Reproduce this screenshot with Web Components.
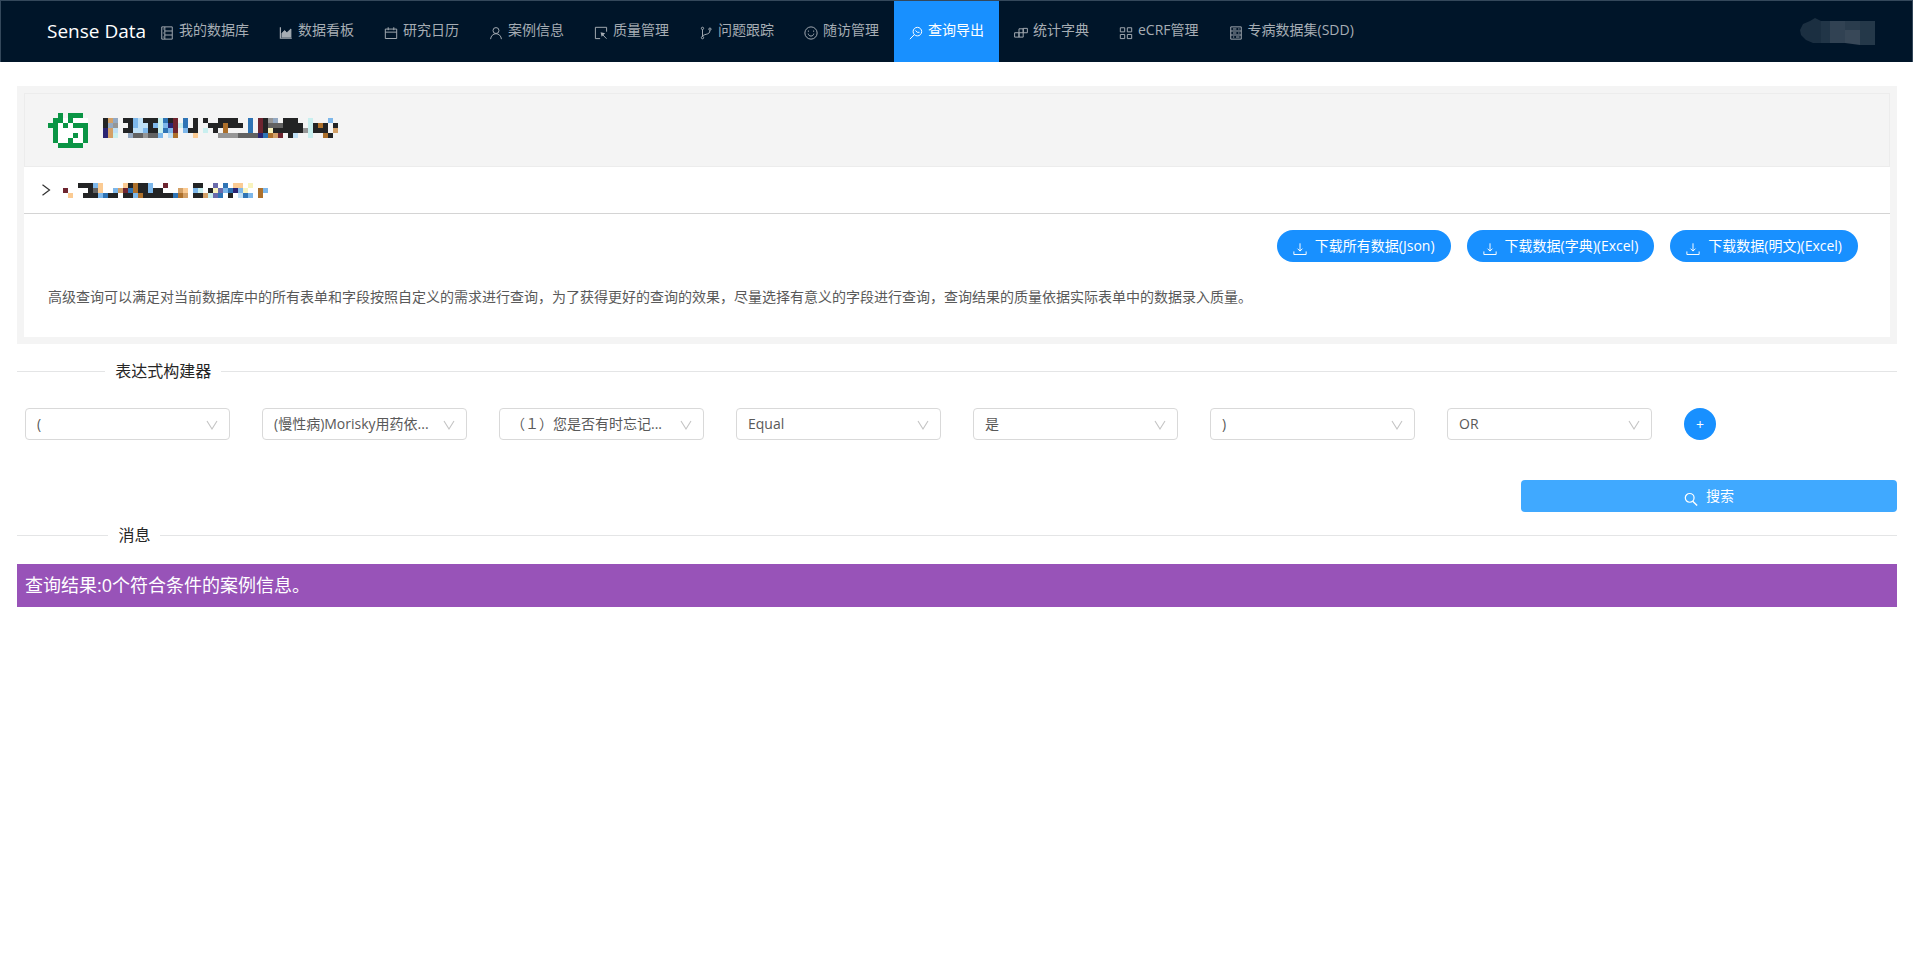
<!DOCTYPE html>
<html lang="zh-CN">
<head>
<meta charset="utf-8">
<title>Sense Data</title>
<style>
  body { margin: 0; background: #fff; color: #595959; font: 14px/22px "Open Sans", "Noto Sans CJK SC", sans-serif; }
</style>
</head>
<body>
<sense-page></sense-page>
<script>
const ICONS = {
  database: '<path d="M2 1h12v14H2zM5.500 5.700H14M5.500 10.300H14M5.500 1v14M3.300 3.400h1M3.300 8h1M3.300 12.600h1"/>',
  chart: '<path d="M1.6 1.5v12.4h13" stroke-width="1.4"/><path d="M3.4 12.6V8.4l3-3.2 2.6 2.6 4.6-4.4v9.2z" fill="currentColor"/>',
  calendar: '<path d="M1.5 3.5h13v10.8h-13zM1.5 7h13M4.8 1.4v3.4M11.2 1.4v3.4"/>',
  user: '<circle cx="8" cy="5.2" r="3.4"/><path d="M1.8 15c.3-3.6 3-6.2 6.2-6.2s5.900 2.600 6.200 6.200"/>',
  select: '<path d="M14.400 6.500v-5h-12.800v12.900h5.400M8.500 8.500l5.800 6"/><path d="M7.500 7l5.200 1.200-4 4z" fill="currentColor" stroke="none"/>',
  branch: '<circle cx="4" cy="2.700" r="1.300"/><circle cx="4" cy="13.300" r="1.300"/><circle cx="12.500" cy="3.600" r="1.300"/><path d="M4 4v8M12.500 5c0 3.200-1.800 3.800-4.300 4.500-2.200.6-3.600 1-4.100 2.500"/>',
  smile: '<circle cx="8" cy="8" r="7"/><path d="M4.800 8.700c.3 1.800 1.600 2.800 3.200 2.800s2.900-1 3.200-2.800M5 5.200v1.400M11 5.200v1.400"/>',
  query: '<circle cx="9.600" cy="6.400" r="4.900"/><path d="M6.200 9.800L1 15M7.400 5.200l2.200 2h2.400"/>',
  blocks: '<path d="M.7 7.700h5v5h-5zM5.700 7.700h4.800v5H5.700zM5.700 3.200h4.800v4.500M10.500 2.700h4.800v5h-4.800zM5.700 3.200v4.500"/>',
  grid: '<path d="M1.500 2h5v4.700h-5zM9.500 2h5v4.700h-5zM1.500 9.700h5v4.700h-5zM9.500 9.700h5v4.700h-5z"/>',
  server: '<path d="M2 1h12v14H2zM2 5.700h12M2 10.300h12M4.500 3.400h4M4.500 8h4M4.500 12.600h1.500M10.500 8h1.500M10.500 3.400h1.500M8 12.600h4"/>',
  download: '<path d="M8 1.500v8.800M5.200 7.600L8 10.400l2.800-2.800M1 10.800v3.500h14v-3.500"/>',
  search: '<circle cx="6.500" cy="6.700" r="5" stroke-width="1.400"/><path d="M10 10.600l5 4.900" stroke-width="1.600"/>',
  right: '<path d="M4 2l8 6-8 6" stroke-width="1.400"/>'
};

/* Colour keys of the cell pictures; a dot leaves the cell empty. */
const PALETTE = {
  G: '#0b9545', W: '#ffffff', K: '#232425', n: '#2a2472', b: '#2f74b5', l: '#7db7ea', c: '#c9efef',
  t: '#d3a067', o: '#ad702b', r: '#6e2530', g: '#626262', h: '#969696', p: '#bfe0f6',
  y: '#f8f3bd', e: '#fbcb93', s: '#94a9c2', v: '#6a6bab'
};
const CELLS = {
  logo: [
    '..G.GGG.',
    '.GGWGWWW',
    'GGWGWGGG',
    '.GWWWWWG',
    '.GWWWGWG',
    '.GWWGWWG',
    '..GGGGG.'
  ],
  title: [
    'Kts.KKlpKKKcbKr.b.K.K..KKKK..b.rKhs.KKK..c...l.',
    'Ksh..KlppKlclnrcb.K..KKKoKKK.b.rKgggKKKK.cKoK.K',
    'ntp.KKpplKKcblr.lKK.c.K.o....b.rKyKKKKKKhcKKK.t',
    'ntc..sgghggl.po...e....hhhhggggnbotr.Kp..c..oK.'
  ],
  subtitle: [
    '...KKKle....eKoKKl..r.....KK..v.b.ee.y...',
    'r....Kge..ltrboKKlKK...te.lc.KyvlbnlyW.ol',
    '.e..KKKlbKK.KKloKKKKKKbot.KKtcvb.K.pbl.o.'
  ]
};

/* The setup runs on the cloned content before it is connected, so nested elements find their attributes in place. */
const define = (name, html, setup) => {
  const template = document.createElement('template');
  template.innerHTML = html;
  customElements.define(name, class extends HTMLElement {
    connectedCallback() {
      if (this.shadowRoot) return;
      const content = template.content.cloneNode(true);
      if (setup) setup(content, this);
      this.attachShadow({ mode: 'open' }).append(content);
    }
  });
};

define('sense-icon', `
  <style>
    :host { display: block; flex: none; width: 14px; height: 14px; }
    svg { display: block; width: 100%; height: 100%; }
  </style>
  <svg viewBox="0 0 16 16" fill="none" stroke="currentColor" stroke-width="1.1" aria-hidden="true"></svg>`,
  (root, host) => { root.querySelector('svg').innerHTML = ICONS[host.getAttribute('name')]; });

define('cell-picture', `
  <style>
    :host { display: block; flex: none; }
    svg { display: block; }
  </style>
  <svg shape-rendering="crispEdges" aria-hidden="true"></svg>`,
  (root, host) => {
    const rows = CELLS[host.getAttribute('name')];
    const svg = root.querySelector('svg');
    svg.setAttribute('width', rows[0].length * 5);
    svg.setAttribute('height', rows.length * 5);
    svg.innerHTML = rows.map((row, y) => [...row].map((key, x) => PALETTE[key]
      ? `<rect x="${x * 5}" y="${y * 5}" width="5" height="5" fill="${PALETTE[key]}"/>` : '').join('')).join('');
  });

define('nav-item', `
  <style>
    :host { display: flex; }
    a { display: flex; align-items: center; gap: 5px; padding: 0 15px 4px; color: #a6adb4; text-decoration: none; white-space: nowrap; }
    sense-icon { margin-top: 7px; }
    :host([active]) a { background: #1890ff; color: #fff; }
  </style>
  <a href="#"><sense-icon></sense-icon><slot></slot></a>`,
  (root, host) => {
    root.querySelector('sense-icon').setAttribute('name', host.getAttribute('icon'));
    if (host.hasAttribute('active')) root.querySelector('a').setAttribute('aria-current', 'page');
  });

define('sense-header', `
  <style>
    :host { display: block; }
    header { display: flex; box-sizing: border-box; height: 62px; padding: 0 37px 0 46px; background: #001529; border: 1px solid #34485b; border-bottom: 0; }
    .brand { display: flex; align-items: center; width: 98px; padding-bottom: 2px; color: #fff; font-size: 19px; text-decoration: none; white-space: nowrap; }
    nav { display: flex; flex: 1; }
    .account { align-self: center; }
    .account svg { display: block; }
  </style>
  <header>
    <a class="brand" href="#">Sense Data</a>
    <nav aria-label="主导航">
      <nav-item icon="database">我的数据库</nav-item>
      <nav-item icon="chart">数据看板</nav-item>
      <nav-item icon="calendar">研究日历</nav-item>
      <nav-item icon="user">案例信息</nav-item>
      <nav-item icon="select">质量管理</nav-item>
      <nav-item icon="branch">问题跟踪</nav-item>
      <nav-item icon="smile">随访管理</nav-item>
      <nav-item icon="query" active>查询导出</nav-item>
      <nav-item icon="blocks">统计字典</nav-item>
      <nav-item icon="grid">eCRF管理</nav-item>
      <nav-item icon="server">专病数据集(SDD)</nav-item>
    </nav>
    <div class="account">
      <svg width="75" height="27" viewBox="0 0 75 27" aria-hidden="true">
        <path d="M0 12L3 6 10 3 15 0l6 3v22H13L6 22 1 17z" fill="#1b2f41"/>
        <path d="M21 3h9v22h-9z" fill="#213547"/>
        <path d="M30 3h15v22H30z" fill="#314253"/>
        <path d="M45 3h15v9H45z" fill="#2a3c4d"/>
        <path d="M45 12h15v15l-15-2z" fill="#384858"/>
        <path d="M60 3h15v24H60z" fill="#243849"/>
      </svg>
    </div>
  </header>`);

define('action-button', `
  <style>
    :host { display: block; }
    button { display: flex; align-items: center; justify-content: center; gap: 8px; box-sizing: border-box; width: 100%; height: 32px; margin: 0; padding: 0 16px; border: 0; border-radius: 16px; background: #1890ff; color: #fff; font: inherit; white-space: nowrap; cursor: pointer; }
    sense-icon { margin-top: 6px; }
    :host([block]) button { border-radius: 4px; background: #40a9ff; }
  </style>
  <button type="button"><sense-icon></sense-icon><slot></slot></button>`,
  (root, host) => root.querySelector('sense-icon').setAttribute('name', host.getAttribute('icon')));

define('project-panel', `
  <style>
    :host { display: block; padding: 7px; background: #f4f4f4; }
    .title { display: flex; align-items: center; gap: 15px; box-sizing: border-box; height: 74px; padding: 0 23px; border: 1px solid #ececec; }
    .title cell-picture + cell-picture { margin-bottom: 5px; }
    .sub { display: flex; align-items: center; box-sizing: border-box; width: 100%; height: 47px; margin: 0; padding: 0 15px; gap: 10px; border: 0; border-bottom: 1px solid #d4d4d4; background: #fff; color: #333; }
    .content { padding: 16px 32px 29px 24px; background: #fff; }
    .actions { display: flex; justify-content: flex-end; gap: 16px; }
    p { margin: 24px 0 0; }
  </style>
  <div class="title"><cell-picture name="logo"></cell-picture><cell-picture name="title"></cell-picture></div>
  <button class="sub" type="button" aria-label="展开" aria-expanded="false"><sense-icon name="right"></sense-icon><cell-picture name="subtitle"></cell-picture></button>
  <div class="content">
    <div class="actions">
      <action-button icon="download">下载所有数据(Json)</action-button>
      <action-button icon="download">下载数据(字典)(Excel)</action-button>
      <action-button icon="download">下载数据(明文)(Excel)</action-button>
    </div>
    <p>高级查询可以满足对当前数据库中的所有表单和字段按照自定义的需求进行查询，为了获得更好的查询的效果，尽量选择有意义的字段进行查询，查询结果的质量依据实际表单中的数据录入质量。</p>
  </div>`);

define('section-divider', `
  <style>
    :host { display: flex; align-items: center; color: #262626; font-size: 16px; line-height: 24px; }
    :host::before, :host::after { content: ""; height: 1px; background: #e4e5e6; }
    :host::before { flex: 5 0 0; }
    :host::after { flex: 95 0 0; }
    h2 { margin: 0; padding: 0 10px; font: inherit; }
  </style>
  <h2><slot></slot></h2>`);

define('choice-box', `
  <style>
    :host { display: grid; align-items: center; padding: 0 16px; }
    select, svg { grid-area: 1 / 1; }
    select { appearance: none; box-sizing: border-box; width: 100%; height: 32px; margin: 0; padding: 0 32px 0 11px; border: 1px solid #d9d9d9; border-radius: 4px; background: #fff; color: #595959; font: inherit; }
    svg { justify-self: end; width: 12px; height: 12px; margin: 2px 12px 0 0; pointer-events: none; }
  </style>
  <select><option></option></select>
  <svg viewBox="0 0 12 12" fill="none" stroke="#c4c4c4" stroke-width="1.100" aria-hidden="true"><path d="M1 2l5 8 5-8"/></svg>`,
  (root, host) => {
    root.querySelector('select').setAttribute('aria-label', host.getAttribute('label'));
    root.querySelector('option').textContent = host.getAttribute('value');
  });

define('expression-row', `
  <style>
    :host { display: grid; grid-template-columns: repeat(8, minmax(0, 1fr)); margin: 0 -8px; }
    button { width: 32px; height: 32px; margin: 0 16px; padding: 2px 0 0; border: 0; border-radius: 50%; background: #1890ff; color: #fff; font: inherit; line-height: 30px; cursor: pointer; }
  </style>
  <choice-box label="左括号" value="("></choice-box>
  <choice-box label="表单" value="(慢性病)Morisky用药依..."></choice-box>
  <choice-box label="字段" value="（１）您是否有时忘记..."></choice-box>
  <choice-box label="运算符" value="Equal"></choice-box>
  <choice-box label="值" value="是"></choice-box>
  <choice-box label="右括号" value=")"></choice-box>
  <choice-box label="逻辑" value="OR"></choice-box>
  <button type="button">+</button>`);

define('result-message', `
  <style>
    :host { display: block; padding: 8px; background: #9853b8; color: #fff; font-size: 18px; line-height: 27px; }
  </style>
  <slot></slot>`);

define('sense-page', `
  <style>
    :host { display: block; }
    main { padding: 24px 16px 24px 17px; }
    section-divider { margin-top: 15px; }
    expression-row { margin-top: 25px; }
    .search { display: flex; justify-content: flex-end; margin-top: 40px; }
    .search action-button { width: 20%; }
    .search + section-divider { margin-top: 11px; }
    result-message { margin-top: 17px; }
  </style>
  <sense-header></sense-header>
  <main>
    <project-panel></project-panel>
    <section-divider>表达式构建器</section-divider>
    <expression-row></expression-row>
    <div class="search"><action-button icon="search" block>搜索</action-button></div>
    <section-divider>消息</section-divider>
    <result-message role="status">查询结果:0个符合条件的案例信息。</result-message>
  </main>`);
</script>
</body>
</html>
